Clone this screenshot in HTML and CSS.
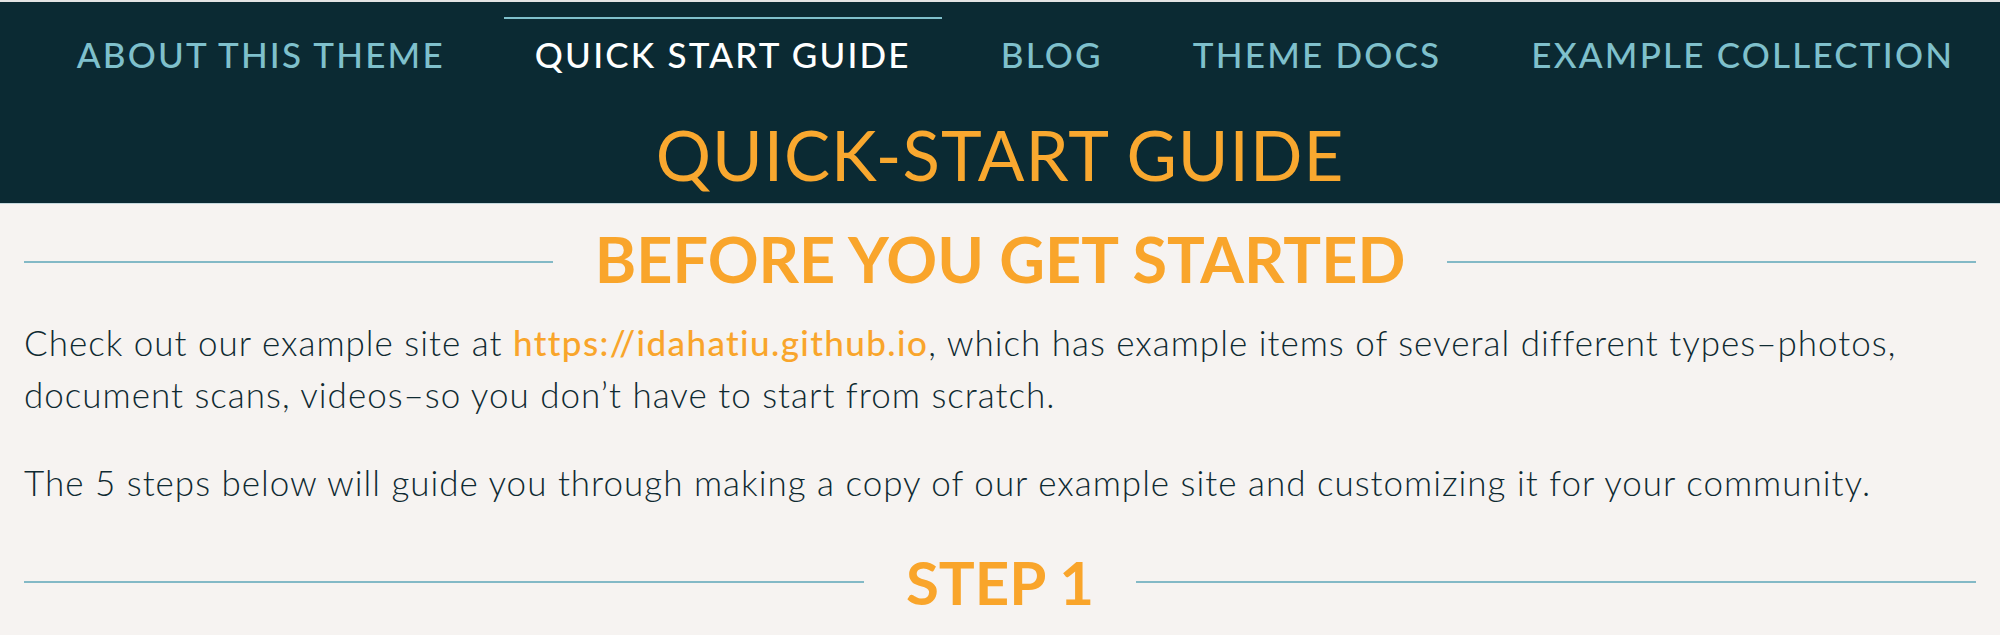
FILE: index.html
```html
<!DOCTYPE html>
<html lang="en">
<head>
<meta charset="utf-8">
<title>Quick-Start Guide</title>
<link rel="stylesheet" href="styles.css">
</head>
<body>
<div class="topstrip"></div>
<header class="site-header">
  <nav class="main-nav">
    <a class="nav-link" href="#">About this theme</a>
    <a class="nav-link active" href="#">Quick start guide</a>
    <a class="nav-link" href="#">Blog</a>
    <a class="nav-link" href="#">Theme docs</a>
    <a class="nav-link" href="#">Example collection</a>
  </nav>
  <h1 class="page-title">Quick-Start Guide</h1>
</header>
<main class="content">
  <h2 class="section-heading heading-first"><span>Before you get started</span></h2>
  <p class="para">Check out our example site at <a class="text-link" href="#">https://idahatiu.github.io</a>, which has example items of several different types–photos, document scans, videos–so you don’t have to start from scratch.</p>
  <p class="para">The 5 steps below will guide you through making a copy of our example site and customizing it for your community.</p>
  <h2 class="section-heading heading-step"><span>Step 1</span></h2>
</main>
</body>
</html>
```
FILE: styles.css
```css
html, body {
  margin: 0;
  padding: 0;
}
body {
  background: #f6f3f1;
  font-family: Lato, "Open Sans", sans-serif;
  color: #0f2a31;
  overflow: hidden;
}
.topstrip {
  height: 2px;
  background: #e4e4e4;
}
.site-header {
  background: #0b2a33;
  padding: 15px 0 14px;
  border-bottom: 1px solid #c5d8dd;
}
.main-nav {
  display: flex;
  justify-content: center;
  gap: 28px;
  padding-left: 31px;
}
.nav-link {
  display: block;
  padding: 18px 31px 0;
  border-top: 2px solid transparent;
  font-size: 35px;
  line-height: 1;
  font-weight: 500;
  letter-spacing: 2.2px;
  text-transform: uppercase;
  text-decoration: none;
  color: #7fc0cc;
  white-space: nowrap;
}
.nav-link.active {
  color: #ffffff;
  border-top-color: #7fc0cc;
}
.page-title {
  margin: 48px 0 0;
  text-align: center;
  font-size: 69px;
  line-height: 1;
  font-weight: 400;
  letter-spacing: 1px;
  text-transform: uppercase;
  color: #f9a82f;
}
.content {
  padding: 0 24px;
}
.section-heading {
  display: flex;
  align-items: center;
  gap: 42px;
  margin: 0;
  line-height: 1;
  font-weight: 700;
  text-transform: uppercase;
  color: #f9a52b;
}
.section-heading::before,
.section-heading::after {
  content: "";
  flex: 1;
  height: 2px;
  background: #83b9c6;
}
.heading-first {
  margin-top: 23px;
  font-size: 63px;
}
.heading-first::before,
.heading-first::after {
  margin-top: 6px;
}
.heading-step {
  margin-top: 44px;
  font-size: 60px;
}
.para {
  margin: 26px 0 0;
  font-size: 35px;
  line-height: 52px;
  font-weight: 300;
  letter-spacing: 1px;
}
.para + .para {
  margin-top: 36px;
}
.text-link {
  color: #f9a52b;
  text-decoration: none;
  font-weight: 500;
  letter-spacing: 1.4px;
}
```
